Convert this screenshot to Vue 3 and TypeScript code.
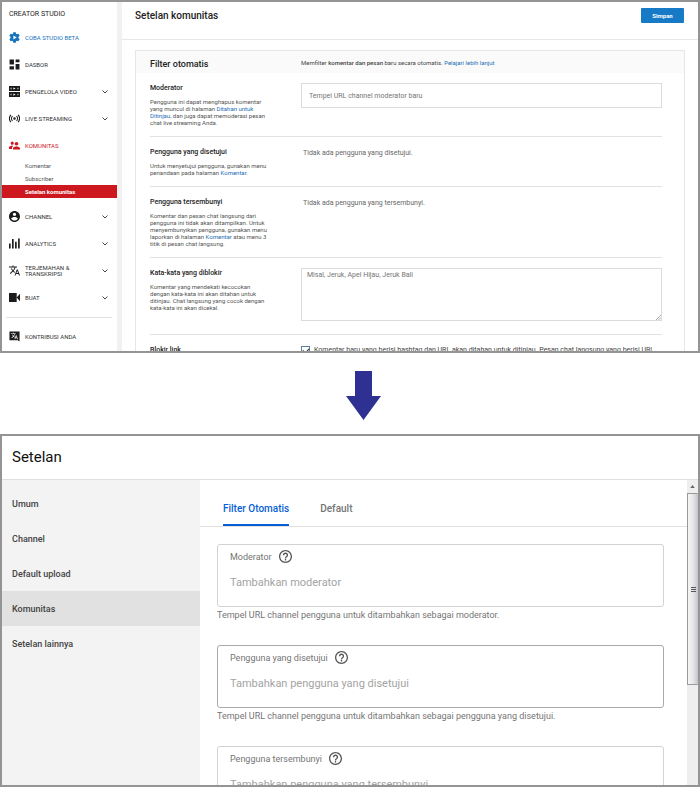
<script setup lang="ts">
import { ref } from 'vue'

interface NavItem {
  label: string
  icon: string
  viewBox?: string
  expandable?: boolean
  tone?: 'blue' | 'red'
}

const translatePath =
  'M12.87 15.07l-2.54-2.51.03-.03c1.74-1.94 2.98-4.17 3.71-6.53H17V4h-7V2H8v2H1v1.99h11.17C11.5 7.92 10.44 9.75 9 11.35 8.07 10.32 7.3 9.19 6.69 8h-2c.73 1.63 1.73 3.17 2.98 4.56l-5.09 5.02L4 19l5-5 3.11 3.11.76-2.04zM18.5 10h-2L12 22h2l1.12-3h4.75L21 22h2l-4.5-12zm-2.62 7l1.62-4.33L19.12 17h-3.24z'

const primaryNav: NavItem[] = [
  {
    label: 'COBA STUDIO BETA',
    tone: 'blue',
    icon: 'M19.14 12.94c.04-.3.06-.61.06-.94 0-.32-.02-.64-.07-.94l2.03-1.58c.18-.14.23-.41.12-.61l-1.92-3.32c-.12-.22-.37-.29-.59-.22l-2.39.96c-.5-.38-1.03-.7-1.62-.94l-.36-2.54c-.04-.24-.24-.41-.48-.41h-3.84c-.24 0-.43.17-.47.41l-.36 2.54c-.59.24-1.13.57-1.62.94l-2.39-.96c-.22-.08-.47 0-.59.22L2.74 8.87c-.12.21-.08.47.12.61l2.03 1.58c-.05.3-.09.63-.09.94s.02.64.07.94l-2.03 1.58c-.18.14-.23.41-.12.61l1.92 3.32c.12.22.37.29.59.22l2.39-.96c.5.38 1.03.7 1.62.94l.36 2.54c.05.24.24.41.48.41h3.84c.24 0 .44-.17.47-.41l.36-2.54c.59-.24 1.13-.56 1.62-.94l2.39.96c.22.08.47 0 .59-.22l1.92-3.32c.12-.22.07-.47-.12-.61l-2.01-1.58zM10 8.5l6 3.5-6 3.5z',
  },
  { label: 'DASBOR', icon: 'M3 12h8V3H3v9zm0 9h8v-6H3v6zm11 0h7V11h-7v10zm0-18v5h7V3h-7z' },
  {
    label: 'PENGELOLA VIDEO',
    expandable: true,
    icon: 'M2 2h20v9H2zM2 13h20v9H2zM5 5v3h1.500V5zM17.500 5v3H19V5zM10 4.500v4l4-2zM5 16v3h1.500v-3zM17.500 16v3H19v-3zM10 15.500v4l4-2z',
  },
  {
    label: 'LIVE STREAMING',
    expandable: true,
    icon: 'M12 9.500a2.500 2.500 0 1 0 0 5a2.500 2.500 0 1 0 0-5zM7.200 6.600a7.500 7.500 0 0 0 0 10.800l1.500-1.500a5.400 5.400 0 0 1 0-7.800zM16.800 6.600l-1.500 1.500a5.400 5.400 0 0 1 0 7.800l1.500 1.500a7.500 7.500 0 0 0 0-10.800zM4.200 3.800a11.500 11.500 0 0 0 0 16.400l1.500-1.500a9.400 9.400 0 0 1 0-13.400zM19.800 3.800l-1.500 1.500a9.400 9.400 0 0 1 0 13.400l1.500 1.500a11.500 11.500 0 0 0 0-16.400z',
    viewBox: '1 1 22 22',
  },
  {
    label: 'KOMUNITAS',
    tone: 'red',
    viewBox: '1 2 22 20',
    icon: 'M16 12c2 0 3.500-1.600 3.500-3.500S18 5 16 5s-3.500 1.600-3.500 3.500S14 12 16 12zM7.500 10.500c1.700 0 3-1.400 3-3.200S9.200 4 7.500 4s-3 1.500-3 3.300 1.300 3.200 3 3.200zM7.500 12.500C5 12.500 1 13.700 1 16v3h6v-2.500c0-1.500 1-2.700 2.500-3.700-.7-.2-1.400-.3-2-.3zM16 14c-2.500 0-7 1-7 3.300V20h14v-2.700C23 15 18.500 14 16 14z',
  },
]

const communityNav = ['Komentar', 'Subscriber', 'Setelan komunitas']

const secondaryNav: NavItem[] = [
  {
    label: 'CHANNEL',
    expandable: true,
    icon: 'M12 2C6.480 2 2 6.480 2 12s4.480 10 10 10 10-4.480 10-10S17.520 2 12 2zm0 3c1.660 0 3 1.340 3 3s-1.340 3-3 3-3-1.340-3-3 1.340-3 3-3zm0 14.200c-2.500 0-4.710-1.280-6-3.220.03-1.990 4-3.080 6-3.080 1.990 0 5.970 1.090 6 3.080-1.290 1.940-3.500 3.220-6 3.220z',
  },
  {
    label: 'ANALYTICS',
    expandable: true,
    icon: 'M2 12h3v9H2zM7.500 4h3v17h-3zM13 9h3v12h-3zM18.500 3h3v18h-3z',
  },
  { label: 'TERJEMAHAN & TRANSKRIPSI', expandable: true, icon: translatePath, viewBox: '1 1 22 22' },
  { label: 'BUAT', expandable: true, icon: 'M2 4h14v16H2zM16 12l6-7v14z' },
]

const settingsNav = ['Umum', 'Channel', 'Default upload', 'Komunitas', 'Setelan lainnya']
const activeSetting = ref('Komunitas')

const tabs = ['Filter Otomatis', 'Default']
const activeTab = ref('Filter Otomatis')

interface Field {
  id: string
  label: string
  placeholder: string
  helper?: string
  strong?: boolean
}

const fields: Field[] = [
  {
    id: 'moderator',
    label: 'Moderator',
    placeholder: 'Tambahkan moderator',
    helper: 'Tempel URL channel pengguna untuk ditambahkan sebagai moderator.',
  },
  {
    id: 'approved',
    label: 'Pengguna yang disetujui',
    placeholder: 'Tambahkan pengguna yang disetujui',
    helper: 'Tempel URL channel pengguna untuk ditambahkan sebagai pengguna yang disetujui.',
    strong: true,
  },
  { id: 'hidden', label: 'Pengguna tersembunyi', placeholder: 'Tambahkan pengguna yang tersembunyi' },
]

const blockLinks = ref(true)
</script>

<template>
  <div class="page">
    <section class="panel classic">
      <nav class="side">
        <h2 class="side-title">CREATOR STUDIO</h2>
        <a v-for="item in primaryNav" :key="item.label" href="#" class="nav-item" :class="item.tone">
          <svg class="nav-icon" :viewBox="item.viewBox ?? '2 2 20 20'" aria-hidden="true">
            <path :d="item.icon" fill-rule="evenodd" />
          </svg>
          <span class="nav-label">{{ item.label }}</span>
          <svg v-if="item.expandable" class="chevron" viewBox="0 0 6 4" aria-hidden="true">
            <path d="M.5.5L3 3L5.500.5" />
          </svg>
        </a>
        <div class="sub">
          <a v-for="(name, i) in communityNav" :key="name" href="#" class="sub-item" :class="{ current: i === 2 }">{{ name }}</a>
        </div>
        <a v-for="item in secondaryNav" :key="item.label" href="#" class="nav-item">
          <svg class="nav-icon" :viewBox="item.viewBox ?? '2 2 20 20'" aria-hidden="true">
            <path :d="item.icon" fill-rule="evenodd" />
          </svg>
          <span class="nav-label">{{ item.label }}</span>
          <svg class="chevron" viewBox="0 0 6 4" aria-hidden="true">
            <path d="M.5.5L3 3L5.500.5" />
          </svg>
        </a>
        <hr class="side-rule" />
        <a href="#" class="nav-item">
          <svg class="nav-icon" viewBox="0 0 24 24" aria-hidden="true">
            <path d="M1 1h22v22l-4-3H1z" />
            <path :d="translatePath" fill="#fff" transform="translate(3.500 2.500) scale(.7)" />
          </svg>
          <span class="nav-label">KONTRIBUSI ANDA</span>
        </a>
      </nav>

      <div class="main">
        <header class="main-head">
          <h1>Setelan komunitas</h1>
          <button type="button" class="save">Simpan</button>
        </header>

        <div class="card">
          <div class="card-head row">
            <h2>Filter otomatis</h2>
            <p>Memfilter <b>komentar dan pesan</b> baru secara otomatis. <a href="#">Pelajari lebih lanjut</a></p>
          </div>

          <div class="row">
            <div class="about">
              <h3><label for="mod-url">Moderator</label></h3>
              <p>Pengguna ini dapat menghapus komentar yang muncul di halaman <a href="#">Ditahan untuk Ditinjau</a>, dan juga dapat memoderasi pesan chat live streaming Anda.</p>
            </div>
            <input id="mod-url" class="url-box" type="text" placeholder="Tempel URL channel moderator baru" />
          </div>

          <div class="row ruled">
            <div class="about">
              <h3>Pengguna yang disetujui</h3>
              <p>Untuk menyetujui pengguna, gunakan menu penandaan pada halaman <a href="#">Komentar</a>.</p>
            </div>
            <p class="empty">Tidak ada pengguna yang disetujui.</p>
          </div>

          <div class="row ruled">
            <div class="about">
              <h3>Pengguna tersembunyi</h3>
              <p>Komentar dan pesan chat langsung dari pengguna ini tidak akan ditampilkan. Untuk menyembunyikan pengguna, gunakan menu laporkan di halaman <a href="#">Komentar</a> atau menu 3 titik di pesan chat langsung.</p>
            </div>
            <p class="empty">Tidak ada pengguna yang tersembunyi.</p>
          </div>

          <div class="row ruled">
            <div class="about">
              <h3><label for="blocked-words">Kata-kata yang diblokir</label></h3>
              <p>Komentar yang mendekati kecocokan dengan kata-kata ini akan ditahan untuk ditinjau. Chat langsung yang cocok dengan kata-kata ini akan dicekal.</p>
            </div>
            <div class="words">
              <textarea id="blocked-words" placeholder="Misal, Jeruk, Apel Hijau, Jeruk Bali"></textarea>
              <svg class="grip" viewBox="0 0 6 6" aria-hidden="true"><path d="M0 6L6 0M3 6L6 3" /></svg>
            </div>
          </div>

          <div class="row ruled">
            <div class="about">
              <h3>Blokir link</h3>
            </div>
            <label class="check">
              <input v-model="blockLinks" type="checkbox" />
              <span>Komentar baru yang berisi hashtag dan URL akan ditahan untuk ditinjau. Pesan chat langsung yang berisi URL</span>
            </label>
          </div>
        </div>
      </div>
    </section>

    <div class="between">
      <svg class="arrow" viewBox="0 0 35 49" aria-hidden="true">
        <path d="M9 0h17v25h9L17.500 49L0 25h9z" />
      </svg>
    </div>

    <section class="panel modern">
      <header class="modern-head"><h1>Setelan</h1></header>
      <div class="modern-body">
        <nav class="modern-nav">
          <button
            v-for="name in settingsNav"
            :key="name"
            type="button"
            :class="{ current: name === activeSetting }"
            @click="activeSetting = name"
          >{{ name }}</button>
        </nav>
        <div class="content">
          <div class="tabs" role="tablist">
            <button
              v-for="tab in tabs"
              :key="tab"
              type="button"
              role="tab"
              :aria-selected="tab === activeTab"
              :class="{ current: tab === activeTab }"
              @click="activeTab = tab"
            >{{ tab }}</button>
          </div>
          <div class="fields">
            <div v-for="field in fields" :key="field.id" class="field">
              <div class="box" :class="{ strong: field.strong }">
                <div class="box-head">
                  <label :for="field.id">{{ field.label }}</label>
                  <button type="button" class="help">
                    <svg viewBox="2 2 20 20" aria-hidden="true">
                      <path d="M11 18h2v-2h-2v2zm1-16C6.480 2 2 6.480 2 12s4.480 10 10 10 10-4.480 10-10S17.520 2 12 2zm0 18c-4.410 0-8-3.590-8-8s3.590-8 8-8 8 3.590 8 8-3.590 8-8 8zm0-14c-2.210 0-4 1.790-4 4h2c0-1.100.9-2 2-2s2 .9 2 2c0 2-3 1.750-3 5h2c0-2.250 3-2.500 3-5 0-2.210-1.790-4-4-4z" />
                    </svg>
                  </button>
                </div>
                <input :id="field.id" type="text" :placeholder="field.placeholder" />
              </div>
              <p v-if="field.helper" class="helper">{{ field.helper }}</p>
            </div>
          </div>
        </div>
        <div class="scrollbar" aria-hidden="true">
          <div class="scroll-up"><svg viewBox="0 0 6 4"><path d="M0 4L3 0L6 4z" /></svg></div>
          <div class="thumb"><i></i><i></i><i></i></div>
          <div class="track"></div>
        </div>
      </div>
    </section>
  </div>
</template>

<style>
body {
  margin: 0;
  background: #fff;
}
</style>

<style scoped>
.page,
.page * {
  box-sizing: border-box;
}

.page {
  display: flex;
  flex-direction: column;
  height: 100vh;
  font-family: Roboto, 'Liberation Sans', sans-serif;
  color: #444;
}

h1, h2, h3, p {
  margin: 0;
  font-weight: 500;
}

p {
  font-weight: 400;
}

button, input, textarea {
  font-family: inherit;
}

a {
  color: #1b6fb5;
  text-decoration: none;
}

.panel {
  flex: 1 1 0;
  min-height: 0;
  overflow: hidden;
  border: 2px solid #949494;
  background: #fff;
}

/* Creator Studio panel */
.classic {
  display: flex;
}

.side {
  flex: none;
  width: 120px;
  border-right: 5px solid #f1f1f1;
}

.side-title {
  padding: 2px 0 0 7px;
  font-size: 7px;
  line-height: 20px;
  font-weight: 400;
  color: #222;
}

.nav-item {
  display: flex;
  align-items: center;
  height: 27px;
  padding: 0 9px 0 7px;
  color: #333;
  fill: #1b1b1b;
}

.nav-item.blue {
  color: #1673bd;
  fill: #1673bd;
}

.nav-item.red {
  color: #cc181e;
  fill: #cc181e;
}

.nav-icon {
  flex: none;
  width: 11px;
  height: 11px;
  margin-right: 5px;
}

.nav-label {
  max-width: 60px;
  font-size: 6px;
  line-height: 6px;
}

.chevron {
  width: 6px;
  height: 4px;
  margin-left: auto;
  fill: none;
  stroke: #444;
}

.sub {
  margin-bottom: 5px;
}

.sub-item {
  display: block;
  padding-left: 23px;
  font-size: 6px;
  line-height: 13px;
  color: #555;
}

.sub-item.current {
  background: #cc181e;
  color: #fff;
  font-weight: 700;
}

.side-rule {
  margin: 6px 5px 5px 4px;
  border: 0;
  border-top: 1px solid #e2e2e2;
}

.main {
  flex: 1;
  min-width: 0;
}

.main-head {
  display: flex;
  align-items: flex-start;
  justify-content: space-between;
  height: 38px;
  padding: 6px 14px 0 13px;
  border-bottom: 1px solid #e6e6e6;
}

.main-head h1 {
  font-size: 10px;
  line-height: 16px;
  color: #222;
}

.save {
  width: 43px;
  height: 15px;
  padding: 0;
  border: 0;
  border-radius: 1px;
  background: #167ac6;
  color: #fff;
  font-size: 6px;
  font-weight: 700;
}

.card {
  margin: 10px 13px 0;
  border: 1px solid #e6e6e6;
  border-bottom: 0;
}

.row {
  display: grid;
  grid-template-columns: 120px 1fr;
  column-gap: 31px;
  align-items: start;
  margin: 0 22px 0 14px;
  padding: 10px 0;
}

.ruled {
  border-top: 1px solid #e2e2e2;
}

.card-head {
  margin: 0;
  padding: 5px 22px 1px 14px;
  background: #fafafa;
}

.card-head h2 {
  font-size: 9px;
  line-height: 16px;
  color: #222;
}

.card-head p {
  font-size: 6px;
  line-height: 13px;
}

.card-head b {
  font-weight: 500;
}

.about h3 {
  font-size: 7px;
  line-height: 10px;
  color: #222;
}

.about p {
  margin-top: 5px;
  font-size: 6px;
  line-height: 7px;
  color: #555;
}

.url-box {
  width: 100%;
  height: 25px;
  padding: 0 7px;
  border: 1px solid #dcdcdc;
  font-size: 7px;
}

.url-box::placeholder,
.words textarea::placeholder {
  color: #757575;
}

.empty {
  padding-left: 2px;
  font-size: 7px;
  line-height: 13px;
  color: #666;
}

.words {
  position: relative;
  margin-bottom: 3px;
}

.words textarea {
  display: block;
  width: 100%;
  height: 53px;
  padding: 2px 5px;
  border: 1px solid #dcdcdc;
  resize: none;
  font-size: 7px;
  line-height: 8px;
}

.grip {
  position: absolute;
  right: 1px;
  bottom: 1px;
  width: 5px;
  height: 5px;
  stroke: #999;
  stroke-width: 1;
}

.check {
  display: flex;
  gap: 4px;
  font-size: 7px;
  line-height: 10px;
  white-space: nowrap;
  color: #444;
}

.check input {
  flex: none;
  appearance: none;
  width: 9px;
  height: 9px;
  margin: 1px 0 0;
  border: 1px solid #5c7f9c;
  background: #fff;
}

.check input:checked::after {
  content: '';
  display: block;
  width: 3px;
  height: 5px;
  margin-left: 2px;
  border: solid #333;
  border-width: 0 1px 1px 0;
  transform: rotate(45deg);
}

/* Connector between the panels */
.between {
  flex: none;
  display: flex;
  justify-content: center;
  height: 81px;
  padding: 18px 0 0 27px;
}

.arrow {
  width: 35px;
  height: 49px;
  fill: #2e3192;
}

/* Settings panel */
.modern {
  display: flex;
  flex-direction: column;
}

.modern-head {
  flex: none;
  padding: 0 10px;
  border-bottom: 1px solid #e0e0e0;
}

.modern-head h1 {
  font-size: 15px;
  line-height: 43px;
  font-weight: 400;
  color: #111;
}

.modern-body {
  flex: 1;
  min-height: 0;
  display: flex;
}

.modern-nav {
  flex: none;
  width: 198px;
  padding-top: 6px;
  background: #f3f3f3;
}

.modern-nav button {
  display: block;
  width: 100%;
  height: 35px;
  padding: 0 10px;
  border: 0;
  background: none;
  text-align: left;
  font-size: 9px;
  font-weight: 500;
  color: #444;
}

.modern-nav .current {
  background: #e1e1e1;
}

.content {
  flex: 1;
  min-width: 0;
  overflow: hidden;
}

.tabs {
  display: flex;
  gap: 31px;
  height: 47px;
  padding: 0 23px;
  border-bottom: 1px solid #e2e2e2;
}

.tabs button {
  padding: 12px 0 0;
  border: 0;
  border-bottom: 2px solid transparent;
  background: none;
  font-size: 10px;
  font-weight: 500;
  color: #757575;
}

.tabs .current {
  border-bottom-color: #065fd4;
  color: #065fd4;
}

.fields {
  display: flex;
  flex-direction: column;
  gap: 23px;
  padding: 17px 23px 0 17px;
}

.box {
  height: 63px;
  padding: 0 12px;
  border: 1px solid #d3d3d3;
  border-radius: 3px;
}

.box.strong {
  border-color: #aaa;
}

.box-head {
  display: flex;
  align-items: center;
  gap: 7px;
  height: 23px;
  font-size: 9px;
  color: #757575;
}

.help {
  width: 13px;
  height: 13px;
  padding: 0;
  border: 0;
  background: none;
}

.help svg {
  display: block;
  width: 13px;
  height: 13px;
  fill: #555;
}

.box input {
  display: block;
  width: 100%;
  height: 28px;
  padding: 0;
  border: 0;
  background: none;
  font-size: 11px;
}

.box input::placeholder {
  color: #a3a3a3;
}

.helper {
  margin-top: 1px;
  font-size: 9px;
  line-height: 14px;
  color: #757575;
}

.scrollbar {
  flex: none;
  display: flex;
  flex-direction: column;
  width: 11px;
  background: #eee;
}

.scroll-up {
  display: flex;
  align-items: center;
  justify-content: center;
  height: 13px;
}

.scroll-up svg {
  width: 5px;
  height: 3px;
  fill: #666;
}

.thumb {
  flex: 190;
  display: flex;
  flex-direction: column;
  align-items: center;
  justify-content: center;
  gap: 1px;
  border: 1px solid #999;
  border-right: 0;
  border-radius: 1px;
  background: linear-gradient(90deg, #f6f6f6, #e6e6ea 50%, #c3c3cb);
}

.thumb i {
  width: 5px;
  height: 1px;
  background: #555;
}

.track {
  flex: 100;
}
</style>
